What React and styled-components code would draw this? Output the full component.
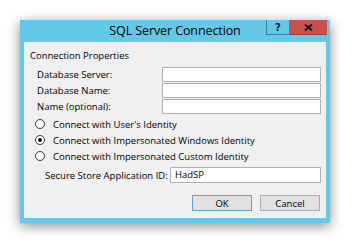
import React from "react";
import styled, { createGlobalStyle } from "styled-components";

const Global = createGlobalStyle`
  html, body { margin: 0; padding: 0; background: #ffffff; }
  body { font-family: "Open Sans", "Noto Sans", Arial, sans-serif; color: #000; }
`;

const Page = styled.div`
  width: 352px;
  height: 240px;
  padding: 20px 0 0 20px;
  box-sizing: border-box;
`;

const Window = styled.div`
  width: 310px;
  box-sizing: border-box;
  background: #62c9eb;
  padding: 0 4px 5px 4px;
  box-shadow: 0 3px 12px rgba(0, 0, 0, 0.45);
  display: flex;
  flex-direction: column;
`;

const TitleBar = styled.div`
  height: 22px;
  margin: 0 -4px;
  display: grid;
  grid-template-columns: 1fr auto 1fr;
  align-items: start;
`;

const Title = styled.div`
  grid-column: 2;
  font-size: 12.5px;
  letter-spacing: -0.1px;
  line-height: 22px;
  color: #000;
  white-space: nowrap;
`;

const Controls = styled.div`
  grid-column: 3;
  justify-self: end;
  display: flex;
  margin-right: 3px;
`;

const CtrlButton = styled.div`
  width: ${(p) => p.$w}px;
  height: 15px;
  box-sizing: border-box;
  background: ${(p) => (p.$close ? "#c75050" : "#62c9eb")};
  border-left: ${(p) => (p.$close ? "none" : "1px solid #3a7f96")};
  border-bottom: 1px solid ${(p) => (p.$close ? "#a33c3c" : "#3a7f96")};
  display: flex;
  align-items: center;
  justify-content: center;
  font-family: "DejaVu Sans", sans-serif;
  font-weight: bold;
  font-size: 10px;
  color: #111;
`;

const Content = styled.div`
  background: #f0f0f0;
  padding: 7px 5px 7px 6px;
  display: flex;
  flex-direction: column;
`;

const GroupLabel = styled.div`
  font-size: 9.5px;
  line-height: 14px;
  height: 14px;
  margin-bottom: 4px;
`;

const FieldList = styled.div`
  display: flex;
  flex-direction: column;
  gap: 1px;
`;

const FieldRow = styled.div`
  display: flex;
  align-items: center;
  padding-left: ${(p) => p.$indent}px;
  margin-top: ${(p) => p.$mt || 0}px;
`;

const Label = styled.div`
  font-size: 9.5px;
  flex: 1;
  white-space: nowrap;
`;

const TextBox = styled.div`
  width: ${(p) => p.$w}px;
  height: ${(p) => p.$h}px;
  box-sizing: border-box;
  background: #ffffff;
  border: 1px solid #aeb0b5;
  font-size: 9.5px;
  line-height: ${(p) => p.$h - 2}px;
  padding-left: 4px;
`;

const RadioList = styled.div`
  display: flex;
  flex-direction: column;
  margin: 2px 0 0 5px;
`;

const RadioRow = styled.div`
  height: 16px;
  display: flex;
  align-items: center;
  gap: 8px;
  font-size: 9.5px;
`;

const RadioCircle = styled.span`
  width: 10px;
  height: 10px;
  box-sizing: border-box;
  border-radius: 50%;
  border: 1px solid #3a3a3a;
  background: #fff;
  display: flex;
  align-items: center;
  justify-content: center;
  &::after {
    content: "";
    width: 4px;
    height: 4px;
    border-radius: 50%;
    background: ${(p) => (p.$on ? "#111" : "transparent")};
  }
`;

const ButtonRow = styled.div`
  display: flex;
  justify-content: flex-end;
  gap: 8px;
  margin: 12px 1px 0 0;
`;

const Button = styled.div`
  width: 60px;
  height: 16px;
  box-sizing: border-box;
  background: #e1e1e1;
  border: 1px solid ${(p) => (p.$default ? "#5e9ed6" : "#adadad")};
  font-size: 9.5px;
  display: flex;
  align-items: center;
  justify-content: center;
`;

const CloseIcon = () => (
  <svg width="9" height="7" viewBox="0 0 9 7">
    <path d="M1 0.5 L8 6.5 M8 0.5 L1 6.5" stroke="#111" strokeWidth="1.8" fill="none" />
  </svg>
);

export default function App() {
  return (
    <>
      <Global />
      <Page>
        <Window>
          <TitleBar>
            <Title>SQL Server Connection</Title>
            <Controls>
              <CtrlButton $w={23}>?</CtrlButton>
              <CtrlButton $w={38} $close>
                <CloseIcon />
              </CtrlButton>
            </Controls>
          </TitleBar>
          <Content>
            <GroupLabel>Connection Properties</GroupLabel>
            <FieldList>
              <FieldRow $indent={7}>
                <Label>Database Server:</Label>
                <TextBox $w={159} $h={15} />
              </FieldRow>
              <FieldRow $indent={7}>
                <Label>Database Name:</Label>
                <TextBox $w={159} $h={15} />
              </FieldRow>
              <FieldRow $indent={7}>
                <Label>Name (optional):</Label>
                <TextBox $w={159} $h={15} />
              </FieldRow>
            </FieldList>
            <RadioList>
              <RadioRow>
                <RadioCircle />
                Connect with User's Identity
              </RadioRow>
              <RadioRow>
                <RadioCircle $on />
                Connect with Impersonated Windows Identity
              </RadioRow>
              <RadioRow>
                <RadioCircle />
                Connect with Impersonated Custom Identity
              </RadioRow>
            </RadioList>
            <FieldRow $indent={15} $mt={3}>
              <Label>Secure Store Application ID:</Label>
              <TextBox $w={151} $h={16}>HadSP</TextBox>
            </FieldRow>
            <ButtonRow>
              <Button $default>OK</Button>
              <Button>Cancel</Button>
            </ButtonRow>
          </Content>
        </Window>
      </Page>
    </>
  );
}
